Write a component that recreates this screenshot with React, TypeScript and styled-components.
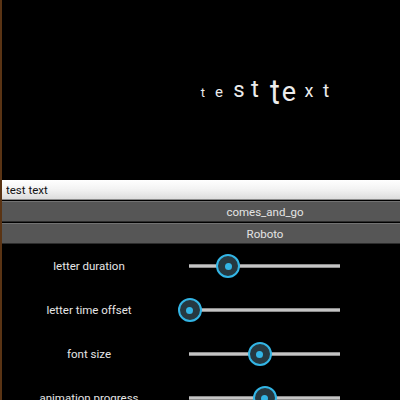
import React from 'react';
import styled, { createGlobalStyle } from 'styled-components';

const GlobalStyle = createGlobalStyle`
  html, body {
    margin: 0;
    padding: 0;
    background: #000;
    overflow: hidden;
  }
  body {
    font-family: Roboto, "Liberation Sans", sans-serif;
  }
`;

const Screen = styled.div`
  width: 526px;
  min-height: 400px;
  border-left: 2px solid #5a3414;
  background: #000;
  display: flex;
  flex-direction: column;

  & > * {
    flex-shrink: 0;
  }
`;

const Stage = styled.div`
  height: 180px;
  display: flex;
  justify-content: center;
  align-items: flex-start;
  padding-top: 72px;
  box-sizing: border-box;
`;

const Word = styled.div`
  display: flex;
  align-items: baseline;
  color: #ececec;
`;

const Letter = styled.span<{ $size: number; $dx: number; $dy: number; $sy: number }>`
  width: 18px;
  display: flex;
  justify-content: center;
  font-size: ${(p) => p.$size}px;
  line-height: 1;
  transform: translate(${(p) => p.$dx}px, ${(p) => p.$dy}px) scaleY(${(p) => p.$sy});
`;

const TextInput = styled.input`
  height: 20px;
  margin: 0;
  border: none;
  border-bottom: 1px solid #8a8a8a;
  padding: 0 4px;
  box-sizing: border-box;
  background: linear-gradient(#ffffff, #f4f4f4 45%, #dcdcdc);
  font-family: Roboto, "Liberation Sans", sans-serif;
  font-size: 11.5px;
  color: #111;
  outline: none;
`;

const Button = styled.button`
  height: 21px;
  margin: 1px 0 0;
  padding: 0;
  border: none;
  border-top: 1px solid #727272;
  border-bottom: 1px solid #2c2c2c;
  background: #565656;
  color: #e4e4e4;
  font-family: Roboto, "Liberation Sans", sans-serif;
  font-size: 11.5px;
  box-sizing: border-box;
`;

const Controls = styled.div`
  display: flex;
  flex-direction: column;
`;

const Row = styled.div`
  height: 44px;
  flex-shrink: 0;
  display: grid;
  grid-template-columns: 174px 151px;
  column-gap: 13px;
  align-items: center;
`;

const Label = styled.div`
  text-align: center;
  color: #e6e6e6;
  font-size: 11.5px;
`;

const Track = styled.div`
  position: relative;
  height: 4px;
  background: #c4c4c4;
  border-top: 1px solid #8c8c8c;
  border-bottom: 1px solid #8c8c8c;
  box-sizing: border-box;
`;

const Thumb = styled.div`
  position: absolute;
  top: 50%;
  width: 24px;
  height: 24px;
  margin: -12px 0 0 -12px;
  border-radius: 50%;
  border: 2px solid #33b5e5;
  background: #263941;
  box-sizing: border-box;
  display: flex;
  align-items: center;
  justify-content: center;

  &::after {
    content: '';
    width: 7px;
    height: 7px;
    border-radius: 50%;
    background: #33b5e5;
  }
`;

const letters = [
  { ch: 't', size: 13, dx: 1, dy: 0, sy: 1 },
  { ch: 'e', size: 15, dx: -1, dy: 0, sy: 1 },
  { ch: 's', size: 22, dx: 1, dy: 0, sy: 1 },
  { ch: 't', size: 24, dx: -1, dy: 0, sy: 1 },
  { ch: 't', size: 30, dx: 1, dy: 5, sy: 1.15 },
  { ch: 'e', size: 27, dx: -3, dy: 4, sy: 1.05 },
  { ch: 'x', size: 18, dx: -1, dy: 0, sy: 1 },
  { ch: 't', size: 19, dx: -2, dy: 0, sy: 1 },
];

const sliders = [
  { label: 'letter duration', value: 26 },
  { label: 'letter time offset', value: 0.5 },
  { label: 'font size', value: 47 },
  { label: 'animation progress', value: 50 },
];

export default function App() {
  return (
    <Screen>
      <GlobalStyle />
      <Stage>
        <Word>
          {letters.map((l, i) => (
            <Letter key={i} $size={l.size} $dx={l.dx} $dy={l.dy} $sy={l.sy}>
              {l.ch}
            </Letter>
          ))}
        </Word>
      </Stage>
      <TextInput defaultValue="test text" />
      <Button type="button">comes_and_go</Button>
      <Button type="button">Roboto</Button>
      <Controls>
        {sliders.map((s) => (
          <Row key={s.label}>
            <Label>{s.label}</Label>
            <Track>
              <Thumb style={{ left: `${s.value}%` }} />
            </Track>
          </Row>
        ))}
      </Controls>
    </Screen>
  );
}
